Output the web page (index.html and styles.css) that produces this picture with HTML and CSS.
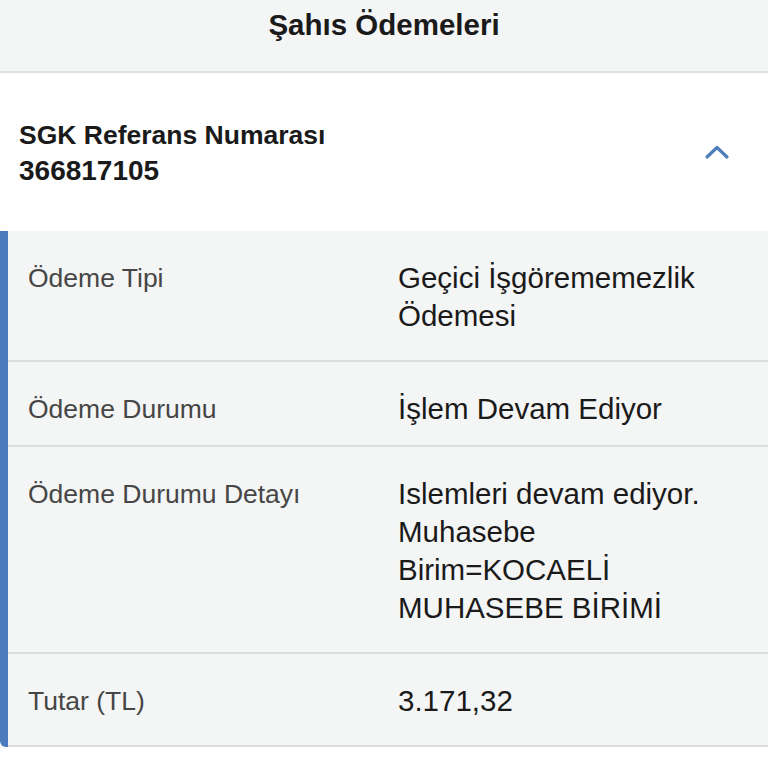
FILE: index.html
```html
<!DOCTYPE html>
<html lang="tr">
<head>
<meta charset="utf-8">
<title>Şahıs Ödemeleri</title>
<link rel="stylesheet" href="styles.css">
</head>
<body>
<header class="topbar">
  <h1 class="title">Şahıs Ödemeleri</h1>
</header>
<section class="ref">
  <div class="ref-text">
    <div>SGK Referans Numarası</div>
    <div class="ref-num">366817105</div>
  </div>
  <svg class="chevron" width="26" height="16" viewBox="0 0 26 16" aria-hidden="true">
    <polyline points="3,13 13,3.5 23,13" fill="none" stroke="#4f7fba" stroke-width="3.2" stroke-linecap="round" stroke-linejoin="round"/>
  </svg>
</section>
<section class="details">
  <div class="row">
    <div class="label">Ödeme Tipi</div>
    <div class="value">Geçici İşgörememezlik Ödemesi</div>
  </div>
  <div class="row row-short">
    <div class="label">Ödeme Durumu</div>
    <div class="value">İşlem Devam Ediyor</div>
  </div>
  <div class="row">
    <div class="label">Ödeme Durumu Detayı</div>
    <div class="value">Islemleri devam ediyor. Muhasebe Birim=KOCAELİ MUHASEBE BİRİMİ</div>
  </div>
  <div class="row">
    <div class="label">Tutar (TL)</div>
    <div class="value">3.171,32</div>
  </div>
</section>
</body>
</html>
```
FILE: styles.css
```css
* { box-sizing: border-box; }
html, body {
  margin: 0;
  padding: 0;
  background: #ffffff;
  font-family: "Liberation Sans", Arial, sans-serif;
}
.topbar {
  background: #f4f5f5;
  border-bottom: 2px solid #dfe0e0;
  height: 73px;
  padding-top: 8px;
}
.title {
  margin: 0;
  text-align: center;
  font-size: 29.5px;
  line-height: 34px;
  font-weight: bold;
  color: #1a1a1a;
}
.ref {
  display: flex;
  align-items: center;
  justify-content: space-between;
  height: 158px;
  padding: 44px 38px 42px 19px;
  background: #ffffff;
}
.ref-text {
  font-size: 26.5px;
  line-height: 36px;
  font-weight: bold;
  color: #1a1a1a;
}
.ref-num {
  font-size: 28px;
}
.chevron {
  display: block;
  margin-top: -2px;
}
.details {
  background: #f4f5f5;
  border-left: 8px solid #4b7bbd;
  border-bottom-left-radius: 6px;
}
.row {
  display: grid;
  grid-template-columns: 370px 1fr;
  padding: 28px 28px 25px 20px;
  border-bottom: 2px solid #dcdddd;
}
.row-short {
  padding-bottom: 17px;
}
.label {
  font-size: 26.5px;
  line-height: 38px;
  color: #464646;
}
.value {
  font-size: 29.5px;
  line-height: 38px;
  color: #1a1a1a;
}
```
